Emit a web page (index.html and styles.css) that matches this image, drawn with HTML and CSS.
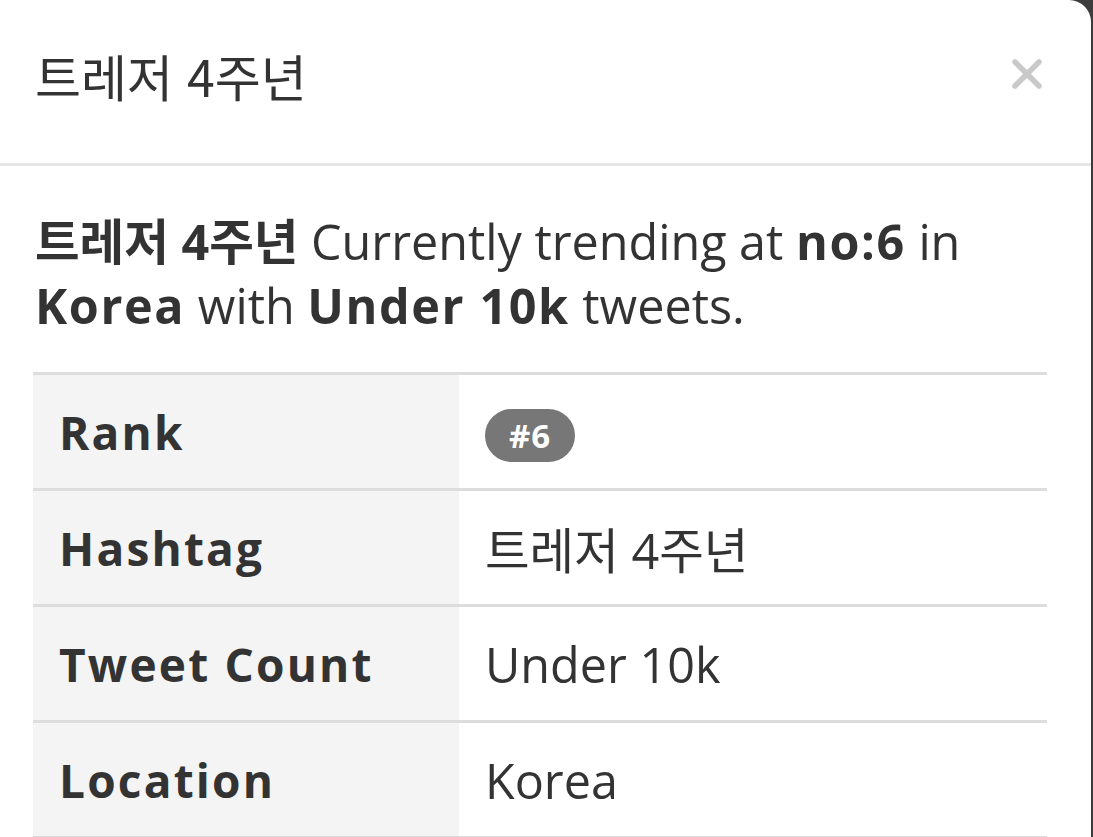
FILE: index.html
```html
<!DOCTYPE html>
<html lang="ko">
<head>
<meta charset="utf-8">
<title>트레저 4주년</title>
<link rel="stylesheet" href="styles.css">
</head>
<body>
<div class="modal">
  <div class="modal-header">
    <h4 class="modal-title">트레저 4주년</h4>
    <button class="close" aria-label="Close">
      <svg width="32" height="32" viewBox="0 0 32 32"><path d="M4 4 L28 28 M28 4 L4 28" stroke="#c9c9c9" stroke-width="5.5" stroke-linecap="round"/></svg>
    </button>
  </div>
  <div class="modal-body">
    <p class="summary"><b>트레저 4주년</b> Currently trending at <b class="lat">no:6</b> in <b class="lat">Korea</b> with <b class="lat">Under 10k</b> tweets.</p>
    <table class="info">
      <tr><th>Rank</th><td><span class="badge">#6</span></td></tr>
      <tr><th>Hashtag</th><td>트레저 4주년</td></tr>
      <tr><th>Tweet Count</th><td>Under 10k</td></tr>
      <tr><th>Location</th><td>Korea</td></tr>
    </table>
  </div>
</div>
</body>
</html>
```

FILE: styles.css
```css
html, body {
  margin: 0;
  padding: 0;
  background: #3c3c3c;
}
body {
  font-family: "Open Sans", "Noto Sans CJK KR", sans-serif;
  color: #333;
}
.modal {
  width: 1091px;
  height: 837px;
  background: #fff;
  border-top-right-radius: 22px;
  overflow: hidden;
}
.modal-header {
  height: 166px;
  box-sizing: border-box;
  border-bottom: 3px solid #e5e5e5;
  display: flex;
  align-items: center;
  justify-content: space-between;
  padding: 0 48px 12px 35px;
}
.modal-title {
  margin: 0;
  font-family: "Noto Sans CJK KR", sans-serif;
  font-weight: 400;
  font-size: 50px;
  line-height: 1.3;
  color: #333;
}
.close {
  border: 0;
  background: none;
  padding: 0;
  margin: 0 0 4px 0;
  display: flex;
}
.modal-body {
  padding: 43px 44px 0 33px;
}
.summary {
  margin: 0 0 35px 2px;
  font-size: 48.5px;
  line-height: 64px;
}
.summary b {
  font-weight: 700;
}
.summary .lat {
  letter-spacing: 1.6px;
}
.info {
  width: 100%;
  border-collapse: collapse;
  border-top: 3px solid #ddd;
}
.info tr {
  border-bottom: 3px solid #ddd;
}
.info th {
  width: 426px;
  box-sizing: border-box;
  text-align: left;
  background: #f4f4f4;
  font-weight: 700;
  font-size: 46px;
  letter-spacing: 2.2px;
  padding: 0 26px;
  height: 113px;
}
.info td {
  font-size: 48.5px;
  padding: 0 26px;
  height: 113px;
}
.badge {
  display: inline-block;
  background: #777;
  color: #fff;
  font-weight: 700;
  font-size: 33px;
  letter-spacing: 1px;
  line-height: 53px;
  padding: 0 24px;
  border-radius: 27px;
  vertical-align: middle;
  position: relative;
  top: -2px;
}
```
